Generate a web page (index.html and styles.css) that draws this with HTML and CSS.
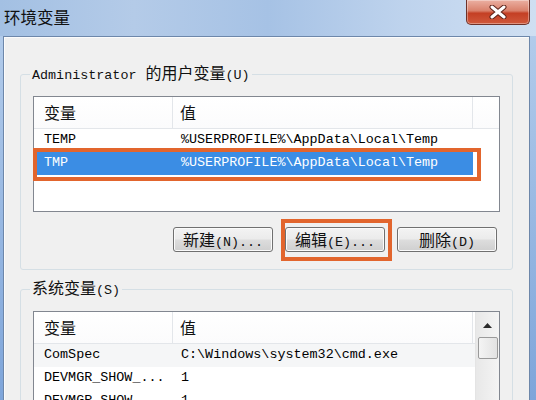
FILE: index.html
```html
<!DOCTYPE html>
<html lang="zh-CN">
<head>
    <meta charset="UTF-8">
    <title>环境变量</title>
    <link rel="stylesheet" href="styles.css">
</head>
<body>

<div class="window">
    <div class="titlebar">
        <div class="title">环境变量</div>
        <div class="close-btn">
            <svg width="18" height="14" viewBox="0 0 18 14">
                <path d="M3 2 L15 12 M15 2 L3 12" stroke="#5b2219" stroke-width="5" stroke-linecap="round"/>
                <path d="M3 2 L15 12 M15 2 L3 12" stroke="#ffffff" stroke-width="3" stroke-linecap="round"/>
            </svg>
        </div>
    </div>

    <div class="dialog">
        <fieldset class="group group-user">
            <legend><span class="mono name">Administrator</span>的用户变量<span class="mono">(U)</span></legend>
            <div class="listbox list-user">
                <div class="list-head">
                    <div class="col-name">变量</div>
                    <div class="col-value">值</div>
                    <div class="col-rest"></div>
                </div>
                <div class="row mono">
                    <div class="col-name">TEMP</div>
                    <div class="col-value">%USERPROFILE%\AppData\Local\Temp</div>
                </div>
                <div class="row mono selected">
                    <div class="col-name">TMP</div>
                    <div class="col-value">%USERPROFILE%\AppData\Local\Temp</div>
                </div>
            </div>
            <div class="buttons">
                <button class="btn">新建<span class="mono">(N)...</span></button>
                <button class="btn btn-marked">编辑<span class="mono">(E)...</span></button>
                <button class="btn">删除<span class="mono">(D)</span></button>
            </div>
        </fieldset>

        <fieldset class="group group-sys">
            <legend>系统变量<span class="mono">(S)</span></legend>
            <div class="listbox list-sys">
                <div class="list-main">
                    <div class="list-head">
                        <div class="col-name">变量</div>
                        <div class="col-value">值</div>
                    </div>
                    <div class="row mono hover">
                        <div class="col-name">ComSpec</div>
                        <div class="col-value">C:\Windows\system32\cmd.exe</div>
                    </div>
                    <div class="row mono">
                        <div class="col-name">DEVMGR_SHOW_...</div>
                        <div class="col-value">1</div>
                    </div>
                    <div class="row mono">
                        <div class="col-name">DEVMGR_SHOW_...</div>
                        <div class="col-value">1</div>
                    </div>
                </div>
                <div class="scrollbar">
                    <div class="arrow-up">
                        <svg width="9" height="5" viewBox="0 0 9 5"><path d="M0 5 L4.5 0 L9 5 Z" fill="#2b2b2b"/></svg>
                    </div>
                    <div class="thumb"></div>
                </div>
            </div>
        </fieldset>
    </div>
</div>

</body>
</html>
```

FILE: styles.css
```css
* { box-sizing: border-box; }
body { margin: 0; font-family: "Noto Sans CJK SC", "Liberation Sans", sans-serif; font-size: 16px; color: #111; }
.mono { font-family: "Liberation Mono", "DejaVu Sans Mono", monospace; font-size: 13.4px; }

.window { width: 536px; height: 400px; overflow: hidden; display: flex; flex-direction: column; background: linear-gradient(180deg, #b7cfec, #7ea5da); }
.titlebar { height: 36px; flex-shrink: 0; display: flex; justify-content: space-between; align-items: flex-start; background: linear-gradient(90deg, #a3c0e3 0%, #b4cbe8 25%, #a6c2e5 50%, #bed3ed 75%, #cfdff2 100%); }
.title { padding: 6px 0 0 4px; font-size: 16.5px; line-height: 22px; color: #111; }
.close-btn { width: 64px; height: 25px; margin-right: 6px; display: flex; align-items: center; justify-content: center; border: 1px solid #6e3128; border-top: none; border-radius: 0 0 5px 5px; background: linear-gradient(180deg, #ebb0a2 0%, #d9806b 45%, #c43f24 55%, #d0593c 100%); box-shadow: inset 0 0 0 1px rgba(255, 255, 255, 0.35); }

.dialog { flex: 1; margin: 0 6px 0 3px; border: 1px solid #6d87aa; border-bottom: none; background: #f0f0f0; box-shadow: inset 1px 1px 0 #fbfbfb; }

.group { margin: 0 16px; border: 1px solid #d5dfe5; border-radius: 3px; padding: 10px 12px 17px 12px; min-width: 0; }
.group legend { padding: 0 2px; margin-left: -3px; line-height: 20px; }
.group legend .name { margin-right: 9px; }
.group-user { margin-top: 25px; }
.group-sys { margin-top: 7px; padding-top: 10px; }

.listbox { border: 1px solid #828790; background: #fff; }
.list-user { height: 116px; }
.list-head { display: flex; height: 32px; border-bottom: 1px solid #e3e6ea; background: linear-gradient(180deg, #fff, #fbfbfc); line-height: 31px; }
.list-head .col-name { width: 139px; padding-left: 10px; border-right: 1px solid #e3e6ea; }
.list-head .col-value { width: 300px; padding-left: 7px; border-right: 1px solid #e3e6ea; }
.list-head .col-rest { flex: 1; }

.row { display: flex; height: 23px; line-height: 22px; position: relative; white-space: nowrap; color: #000; }
.row .col-name { width: 139px; padding-left: 10px; overflow: hidden; }
.row .col-value { width: 300px; padding-left: 8px; }
.row.selected .col-name, .row.selected .col-value { background: #3b8de4; color: #fff; }
.row.selected::after { content: ""; position: absolute; left: -1px; right: 18px; top: -4px; bottom: -6px; border: 4px solid #e2652d; }
.row.hover { background: #f5f6f7; }

.buttons { display: flex; justify-content: flex-end; gap: 12px; margin: 15px 3px 0 0; }
.btn { width: 100px; height: 25px; padding: 0; position: relative; border: 1px solid #707070; border-radius: 3px; background: linear-gradient(180deg, #f3f3f3 0%, #ebebeb 48%, #dddddd 52%, #cfcfcf 100%); box-shadow: inset 0 0 0 1px #fbfbfb; font-family: "Noto Sans CJK SC", sans-serif; font-size: 16px; line-height: 22px; color: #111; }
.btn-marked::after { content: ""; position: absolute; left: -5px; right: -8px; top: -9px; bottom: -10px; border: 4px solid #e2652d; }

.list-sys { display: flex; height: 120px; border-bottom: none; }
.list-main { flex: 1; }
.scrollbar { width: 24px; border-left: 1px solid #e4e4e4; background: linear-gradient(90deg, #e8e8e8, #f4f4f4); display: flex; flex-direction: column; align-items: center; }
.arrow-up { height: 25px; display: flex; align-items: center; justify-content: center; padding-top: 2px; }
.thumb { width: 20px; height: 22px; border: 1px solid #9a9a9a; border-radius: 2px; background: linear-gradient(90deg, #f4f4f4, #e2e2e2); }
```
